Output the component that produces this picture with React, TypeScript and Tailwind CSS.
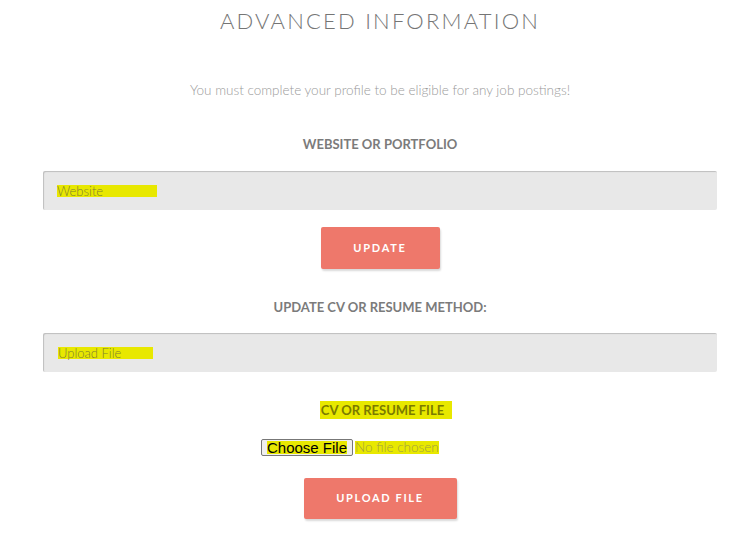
import React from "react";

const font = { fontFamily: '"Lato", "Open Sans", sans-serif' };

function Highlight({ children, className = "" }: { children: React.ReactNode; className?: string }) {
  return <span className={`bg-[#e8e800] ${className}`}>{children}</span>;
}

export default function App() {
  return (
    <div className="h-[543px] w-[745px] overflow-hidden bg-white" style={font}>
      <div className="ml-[43px] flex w-[674px] flex-col items-center">
        <h1 className="mt-[5px] text-[22px] leading-[32px] font-light tracking-[0.1em] text-[#757575]">
          ADVANCED INFORMATION
        </h1>

        <p className="mt-[43px] text-[13.5px] leading-[20px] font-light text-[#9a9a9a]">
          You must complete your profile to be eligible for any job postings!
        </p>

        <label className="mt-[34px] text-[13px] leading-[20px] font-bold text-[#7b7b7b]">
          WEBSITE OR PORTFOLIO
        </label>

        <div className="mt-[17px] flex h-[39px] w-full items-center rounded-[2px] bg-[#e8e8e8] px-[14px] shadow-[inset_1px_1px_1px_rgba(0,0,0,0.18)]">
          <Highlight className="pr-[54px] text-[13px] leading-[12px] font-light text-[#7f7f30]">Website</Highlight>
        </div>

        <button className="mt-[17px] h-[42px] w-[119px] rounded-[2px] bg-[#ee786b] text-[11px] font-bold tracking-[0.16em] text-white shadow-[1px_2px_2px_rgba(0,0,0,0.15)]">
          UPDATE
        </button>

        <label className="mt-[28px] text-[13px] leading-[20px] font-bold text-[#7b7b7b]">
          UPDATE CV OR RESUME METHOD:
        </label>

        <div className="mt-[16px] flex h-[39px] w-full items-center rounded-[2px] bg-[#e8e8e8] px-[15px] shadow-[inset_1px_1px_1px_rgba(0,0,0,0.18)]">
          <Highlight className="pr-[32px] text-[13px] leading-[12px] font-light text-[#7f7f30]">Upload File</Highlight>
        </div>

        <label className="mt-[28px] ml-[12px] text-[13px] leading-[20px] font-bold text-[#7b7b00]">
          <Highlight className="py-[1px] pr-[8px] pl-[1px]">CV OR RESUME FILE</Highlight>
        </label>

        <div className="mt-[19px] flex w-[238px] items-center">
          <span
            className="box-border flex h-[17px] items-center rounded-[2px] border border-[#777] bg-[#efefef] px-[5px] text-[15px] text-black"
            style={{ fontFamily: '"Liberation Sans", Arial, sans-serif' }}
          >
            <span className="bg-[#e8e800] leading-[13px]">Choose File</span>
          </span>
          <Highlight className="ml-[2px] text-[13.5px] leading-[13px] font-light text-[#a0a040]">No file chosen</Highlight>
        </div>

        <button className="mt-[22px] h-[41px] w-[153px] rounded-[2px] bg-[#ee786b] text-[11px] font-bold tracking-[0.15em] text-white shadow-[1px_2px_2px_rgba(0,0,0,0.15)]">
          UPLOAD FILE
        </button>
      </div>
    </div>
  );
}
